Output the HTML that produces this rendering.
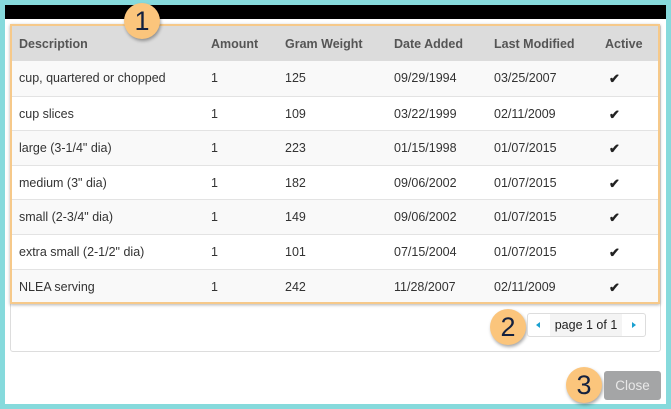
<!DOCTYPE html>
<html><head><style>
*{margin:0;padding:0;box-sizing:border-box}
body{width:671px;height:409px;background:#86dadc;position:relative;overflow:hidden;font-family:"Liberation Sans",sans-serif;font-size:12.5px;color:#333}
#win{position:absolute;left:5px;top:5px;width:661px;height:399px;background:#fff}
#bar{position:absolute;left:5px;top:5px;width:661px;height:14px;background:#000}
#panel{position:absolute;left:10px;top:24px;width:651px;height:328px;border:1px solid #ddd;border-radius:3px}
#tbl{position:absolute;left:10px;top:24px;width:650px;height:280px;border:2px solid #f6c98a;box-shadow:0 1px 3px rgba(0,0,0,.3)}
.r{position:absolute;left:0;width:646px;height:34.6px;border-top:1px solid #e3e3e3}
.r span{position:absolute;top:10px;white-space:nowrap}
.h{background:#dcdcdc;color:#555;border:none;height:35px;font-weight:bold}
.h span{top:11px}
.o{background:#f9f9f9}.e{background:#fff}
.c1{left:7px}.c2{left:199px}.c3{left:273px}.c4{left:382px}.c5{left:482px}.c6{left:593px}
.ck{left:597px!important;font-size:13px;color:#222;font-weight:bold}
.badge{position:absolute;width:36px;height:36px;border-radius:50%;background:#fbc57c;box-shadow:1px 2px 3px rgba(0,0,0,.35);color:#14213f;font-size:27px;text-align:center;line-height:36px}
#pg{position:absolute;left:527px;top:313px;width:119px;height:24px;border:1px solid #ddd;border-radius:3px;background:#fff}
#pg .m{position:absolute;left:22px;top:0;width:72px;height:22px;background:#f4f4f4;line-height:22px;text-align:center;color:#222;font-size:12.5px}
.tri{position:absolute;top:8px;width:0;height:0;border-top:3px solid transparent;border-bottom:3px solid transparent}
#close{position:absolute;left:604px;top:371px;width:57px;height:29px;background:#a4a5a6;border-radius:3px;color:#e8e8e8;font-size:13.5px;text-align:center;line-height:29px}
</style></head><body>
<div id="win"></div><div id="bar"></div>
<div id="panel"></div>
<div id="tbl">
<div class="r h" style="top:0"><span class="c1">Description</span><span class="c2">Amount</span><span class="c3">Gram Weight</span><span class="c4">Date Added</span><span class="c5">Last Modified</span><span class="c6">Active</span></div>
<div class="r o" style="top:35px;border:none"><span class="c1">cup, quartered or chopped</span><span class="c2">1</span><span class="c3">125</span><span class="c4">09/29/1994</span><span class="c5">03/25/2007</span><span class="c6 ck">✔</span></div>
<div class="r e" style="top:69.6px"><span class="c1">cup slices</span><span class="c2">1</span><span class="c3">109</span><span class="c4">03/22/1999</span><span class="c5">02/11/2009</span><span class="c6 ck">✔</span></div>
<div class="r o" style="top:104.2px"><span class="c1">large (3-1/4" dia)</span><span class="c2">1</span><span class="c3">223</span><span class="c4">01/15/1998</span><span class="c5">01/07/2015</span><span class="c6 ck">✔</span></div>
<div class="r e" style="top:138.8px"><span class="c1">medium (3" dia)</span><span class="c2">1</span><span class="c3">182</span><span class="c4">09/06/2002</span><span class="c5">01/07/2015</span><span class="c6 ck">✔</span></div>
<div class="r o" style="top:173.4px"><span class="c1">small (2-3/4" dia)</span><span class="c2">1</span><span class="c3">149</span><span class="c4">09/06/2002</span><span class="c5">01/07/2015</span><span class="c6 ck">✔</span></div>
<div class="r e" style="top:208px"><span class="c1">extra small (2-1/2" dia)</span><span class="c2">1</span><span class="c3">101</span><span class="c4">07/15/2004</span><span class="c5">01/07/2015</span><span class="c6 ck">✔</span></div>
<div class="r o" style="top:242.6px;height:33.4px"><span class="c1">NLEA serving</span><span class="c2">1</span><span class="c3">242</span><span class="c4">11/28/2007</span><span class="c5">02/11/2009</span><span class="c6 ck">✔</span></div>
</div>
<div class="badge" style="left:124px;top:3px">1</div>
<div class="badge" style="left:490px;top:309px">2</div>
<div class="badge" style="left:566px;top:367px">3</div>
<div id="pg"><div class="tri" style="left:8px;border-right:4px solid #1aa0d0"></div><div class="m">page 1 of 1</div><div class="tri" style="left:104px;border-left:4px solid #1aa0d0"></div></div>
<div id="close">Close</div>
</body></html>
